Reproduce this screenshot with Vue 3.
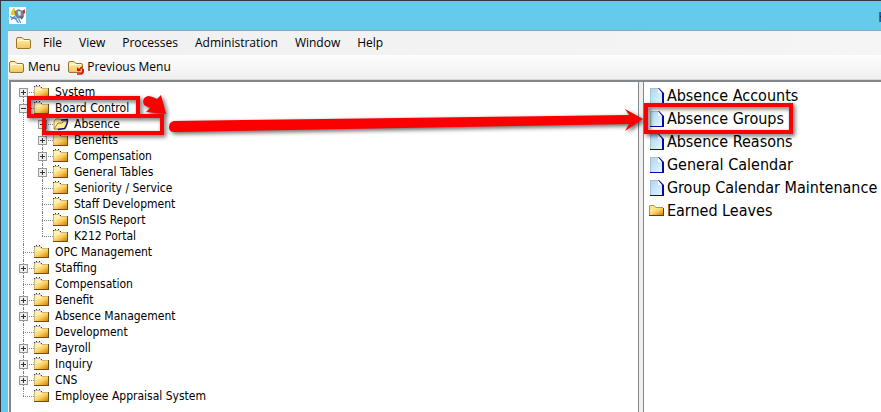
<script setup>
import { ref } from 'vue';

const menus = ['File', 'View', 'Processes', 'Administration', 'Window', 'Help'];

const tree = ref([
    { name: 'System', expandable: true },
    {
        name: 'Board Control',
        expandable: true,
        open: true,
        children: [
            { name: 'Absence', expandable: true, selected: true },
            { name: 'Benefits', expandable: true },
            { name: 'Compensation', expandable: true },
            { name: 'General Tables', expandable: true },
            { name: 'Seniority / Service' },
            { name: 'Staff Development' },
            { name: 'OnSIS Report' },
            { name: 'K212 Portal' }
        ]
    },
    { name: 'OPC Management' },
    { name: 'Staffing', expandable: true },
    { name: 'Compensation' },
    { name: 'Benefit', expandable: true },
    { name: 'Absence Management', expandable: true },
    { name: 'Development' },
    { name: 'Payroll', expandable: true },
    { name: 'Inquiry', expandable: true },
    { name: 'CNS', expandable: true },
    { name: 'Employee Appraisal System' }
]);

const items = [
    { name: 'Absence Accounts', icon: 'page' },
    { name: 'Absence Groups', icon: 'page' },
    { name: 'Absence Reasons', icon: 'page' },
    { name: 'General Calendar', icon: 'page' },
    { name: 'Group Calendar Maintenance', icon: 'page' },
    { name: 'Earned Leaves', icon: 'folder-small' }
];

const toggle = (node) => {
    if (node.children) node.open = !node.open;
};
</script>

<template>
    <div class="window">
        <!-- shared icon shapes -->
        <svg class="defs" aria-hidden="true">
            <defs>
                <linearGradient id="gold" x1="0" y1="0" x2="1" y2="1">
                    <stop offset="0" stop-color="#fffbd0" />
                    <stop offset="0.5" stop-color="#fcd060" />
                    <stop offset="1" stop-color="#d08000" />
                </linearGradient>
                <linearGradient id="soft" x1="0" y1="0" x2="0" y2="1">
                    <stop offset="0" stop-color="#fff3b8" />
                    <stop offset="1" stop-color="#f2c558" />
                </linearGradient>
                <linearGradient id="sheet" x1="0" y1="0" x2="1" y2="1">
                    <stop offset="0" stop-color="#a9d6f2" />
                    <stop offset="1" stop-color="#e8f6ff" />
                </linearGradient>
            </defs>
            <symbol id="folder" viewBox="0 0 16 16">
                <path d="M0 14V3L1 2H6L8 4H14V14Z" fill="#c9b67c" />
                <path d="M1 13V3H6L8 5H14V13Z" fill="#fff0b4" />
                <path d="M1 7H6L8 5H14V13H1Z" fill="url(#gold)" />
                <path d="M0 13H14V4H15V14H0Z" fill="#6b5020" />
                <path d="M0 2h1v1h-1zM2 1h1v1h-1zM5 1h1v1h-1zM7 3h1v1h-1z" fill="#2a2ab0" />
            </symbol>
            <symbol id="folder-small" viewBox="0 0 16 16">
                <path d="M0 13V3L1 2H5L7 4H14V13Z" fill="#b8923c" />
                <path d="M1 12V3H5L7 5H13V12Z" fill="#ffe48a" />
                <path d="M1 7H6L8 5H14V12H1Z" fill="url(#gold)" />
                <path d="M0 12H14V5H15V13H0Z" fill="#5a4010" />
            </symbol>
            <symbol id="folder-open" viewBox="0 0 16 16">
                <path d="M1 13V5L3 3H7L9 5H13V12Z" fill="#fff3a8" stroke="#b49a50" />
                <path d="M1 13L5 7H9L11 5H15L12 13Z" fill="#fdeb90" stroke="#a08530" />
                <path d="M8 4L14.5 3.500L14 8L11.500 12.500L5 13.500" fill="none" stroke="#0b0ba0" stroke-width="1.3" />
            </symbol>
            <symbol id="folder-plain" viewBox="0 0 16 16">
                <path d="M0.500 12V4Q0.500 2.500 2 2.500H6L8 4.500H13Q14.500 4.500 14.500 6V12Q14.500 13.500 13 13.500H2Q0.500 13.500 0.500 12Z" fill="url(#soft)" stroke="#9c752a" />
                <path d="M1.500 7Q1.500 5.500 4 5.500H13" fill="none" stroke="#fffce0" />
            </symbol>
            <symbol id="page" viewBox="0 0 16 18">
                <path d="M2 1H10L13 5V16H2Z" fill="url(#sheet)" />
                <path d="M1 1H10V2H2V16H1Z" fill="#a8c0d2" />
                <path d="M9 1L13 6H9Z" fill="#fff" />
                <path d="M9 1H10L15 6V17H1V16H13V6Z" fill="#0808a8" />
            </symbol>
        </svg>

        <header class="title-bar">
            <svg class="app-icon" viewBox="0 0 16 16" aria-hidden="true">
                <path d="M0 0H16V16H0Z" fill="#fff" />
                <path d="M1 7L4 1H5L7 6L6 8Z" fill="#e0cc30" />
                <path d="M5 4L9 2L14 4V9L10 11L6 9Z" fill="#77828c" />
                <path d="M8 4H11V8H9Z" fill="#d9edf7" />
                <path d="M13 3L15 2V6H13Z" fill="#ee2020" />
                <path d="M1 9L5 11L9 10M2 12L5 9L8 14M6 11L9 15M9 11L11 15" fill="none" stroke="#3f82d6" />
                <path d="M10 9H14L12 12" fill="#555f69" />
            </svg>
            <span class="title-text">H</span>
        </header>

        <div class="frame">
            <nav class="menu-bar">
                <svg class="icon" aria-hidden="true"><use href="#folder-plain" /></svg>
                <button v-for="m in menus" :key="m" type="button">{{ m }}</button>
            </nav>
            <div class="tool-bar">
                <button type="button">
                    <svg class="icon" aria-hidden="true"><use href="#folder-plain" /></svg>
                    <span>Menu</span>
                </button>
                <button type="button">
                    <svg class="icon" viewBox="0 0 16 16" aria-hidden="true">
                        <use href="#folder-plain" width="16" height="16" />
                        <path d="M9 8V12H13Z" fill="#f00000" />
                        <path d="M10 12L14 8M15 10Q16 15 12 15H9" fill="none" stroke="#f00000" stroke-width="1.6" />
                    </svg>
                    <span>Previous Menu</span>
                </button>
            </div>

            <main class="panes">
                <section class="tree-pane">
                    <ul class="tree">
                        <li v-for="node in tree" :key="node.name" class="node">
                            <div class="row">
                                <button v-if="node.expandable" type="button" class="expander" :class="{ minus: node.open }"
                                    :aria-label="node.name" @click="toggle(node)"></button>
                                <svg class="icon" aria-hidden="true"><use href="#folder" /></svg>
                                <span class="label">{{ node.name }}</span>
                            </div>
                            <ul v-if="node.open" class="tree">
                                <li v-for="child in node.children" :key="child.name" class="node">
                                    <div class="row">
                                        <button v-if="child.expandable" type="button" class="expander" :aria-label="child.name"></button>
                                        <svg class="icon" aria-hidden="true">
                                            <use :href="child.selected ? '#folder-open' : '#folder'" />
                                        </svg>
                                        <span class="label">{{ child.name }}</span>
                                    </div>
                                </li>
                            </ul>
                        </li>
                    </ul>
                </section>
                <div class="splitter"></div>
                <section class="list-pane">
                    <ul class="items">
                        <li v-for="item in items" :key="item.name">
                            <svg :class="item.icon" aria-hidden="true"><use :href="'#' + item.icon" /></svg>
                            <a href="#">{{ item.name }}</a>
                        </li>
                    </ul>
                </section>
            </main>
        </div>

        <!-- callouts drawn over the panes -->
        <svg class="callouts" aria-hidden="true">
            <g fill="none" stroke="#fb0000" stroke-width="4">
                <path d="M29 98H138V116H29Z" />
                <path d="M44 116H162V133H44Z" />
                <path d="M646 105H791V132H646Z" />
            </g>
            <g fill="#fb0000">
                <path d="M148 96Q151 96 157 99L161 95L166 114L146 112L150 108L144 105Q141 98 148 96Z" />
                <path d="M174 121L629 115L625 109L643 119L625 131L629 124L174 132Q169 132 169 127T174 121Z" />
            </g>
        </svg>
    </div>
</template>

<style>
body {
    margin: 0;
}
</style>

<style scoped>
.window {
    position: relative;
    display: flex;
    flex-direction: column;
    box-sizing: border-box;
    min-height: 100vh;
    border: 1px solid #333940;
    border-width: 1px 0 0 1px;
    background: #66cbea;
    color: #000;
    font: 12px/16px "Open Sans", "Noto Sans", sans-serif;
    overflow: hidden;
}

.defs {
    position: absolute;
    width: 0;
    height: 0;
}

ul {
    margin: 0;
    padding: 0;
    list-style: none;
}

button {
    padding: 0;
    border: 0;
    background: none;
    color: inherit;
    font: inherit;
}

.icon {
    width: 16px;
    height: 16px;
    flex: none;
}

/* --- Title and bars --- */
.title-bar {
    display: flex;
    align-items: center;
    justify-content: space-between;
    height: 29px;
    padding-left: 8px;
    overflow: hidden;
}

.app-icon {
    width: 17px;
    height: 17px;
}

.title-text {
    width: 3px;
    color: #14304a;
    font-size: 15px;
    white-space: nowrap;
}

.frame {
    flex: 1;
    display: flex;
    flex-direction: column;
    margin-left: 7px;
    border-top: 1px solid #85a9bb;
    background: #f0f0f0;
}

.menu-bar {
    display: flex;
    align-items: center;
    gap: 17px;
    height: 24px;
    padding-left: 8px;
    background: linear-gradient(90deg, #f0f0f0, #f5f5f5);
}

.menu-bar .icon {
    margin-right: -6px;
}

.tool-bar {
    display: flex;
    align-items: center;
    gap: 8px;
    height: 24px;
    padding-left: 1px;
    border-bottom: 1px solid #d8d8d8;
    background: linear-gradient(#fdfdfd, #efefef);
}

.tool-bar button {
    display: flex;
    align-items: center;
    gap: 3px;
}

/* --- Panes --- */
.panes {
    flex: 1;
    display: grid;
    grid-template-columns: minmax(0, 61fr) 6px minmax(0, 23fr);
    margin-left: 1px;
    border-top: 2px solid #83868b;
    background: #fff;
    font-family: "DejaVu Sans Condensed", "Open Sans", sans-serif;
}

.tree-pane {
    padding: 2px 0 0 12px;
    border-left: 2px solid #83868b;
}

.splitter {
    box-sizing: border-box;
    border: 1px solid #83868b;
    border-width: 0 1px;
    background: #f0f0f0;
}

.node {
    position: relative;
}

/* dotted guide down the left of each level */
.node::before {
    content: "";
    position: absolute;
    top: 0;
    bottom: 0;
    border-left: 1px dotted #808080;
}

.node:first-child::before {
    top: 8px;
}

.node:last-child::before {
    bottom: auto;
    height: 8px;
}

.row {
    position: relative;
    display: flex;
    align-items: center;
    height: 16px;
    padding-left: 11px;
}

.row::before {
    content: "";
    position: absolute;
    left: 0;
    top: 8px;
    width: 11px;
    border-top: 1px dotted #808080;
}

.node > .tree {
    padding-left: 19px;
}

.expander {
    position: absolute;
    left: -4px;
    top: 4px;
    width: 9px;
    height: 9px;
    border: 1px solid #969696;
    background:
        linear-gradient(#333, #333) center / 5px 1px no-repeat,
        linear-gradient(#333, #333) center / 1px 5px no-repeat,
        #eee;
}

.expander.minus {
    background: linear-gradient(#333, #333) center / 5px 1px no-repeat, #eee;
}

.label {
    margin-left: 5px;
    white-space: nowrap;
}

.list-pane {
    padding: 2px 0 0 5px;
}

.items li {
    display: flex;
    align-items: center;
    gap: 2px;
    height: 23px;
    font-size: 16px;
    line-height: 23px;
    white-space: nowrap;
}

.items svg {
    flex: none;
    width: 16px;
    height: 18px;
}

.items .folder-small {
    height: 16px;
}

.items a {
    color: inherit;
    text-decoration: none;
}

.callouts {
    position: absolute;
    left: -1px;
    top: -1px;
    width: 100%;
    height: 100%;
    pointer-events: none;
    filter: drop-shadow(2px 2px 2px rgba(0, 0, 0, 0.6));
}
</style>
